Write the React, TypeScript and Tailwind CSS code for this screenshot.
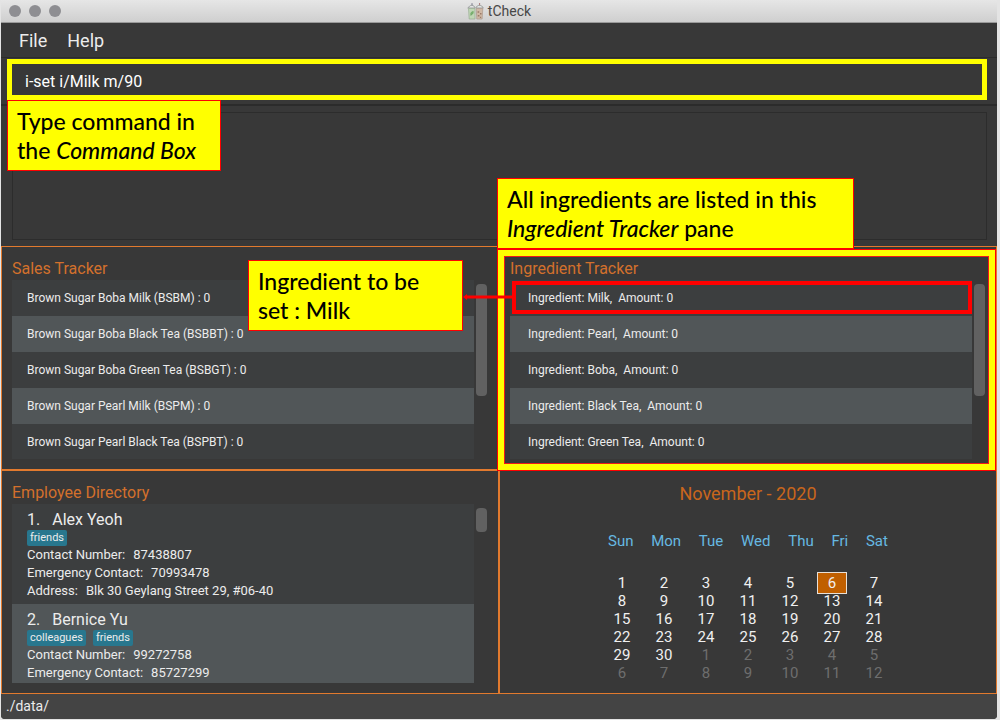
import type { ReactNode } from "react";

const sales = [
  "Brown Sugar Boba Milk (BSBM) : 0",
  "Brown Sugar Boba Black Tea (BSBBT) : 0",
  "Brown Sugar Boba Green Tea (BSBGT) : 0",
  "Brown Sugar Pearl Milk (BSPM) : 0",
  "Brown Sugar Pearl Black Tea (BSPBT) : 0",
];

const ingredients = ["Milk", "Pearl", "Boba", "Black Tea", "Green Tea"];

type Employee = {
  name: string;
  tags: string[];
  fields: [string, string][];
};

const employees: Employee[] = [
  {
    name: "Alex Yeoh",
    tags: ["friends"],
    fields: [
      ["Contact Number:", "87438807"],
      ["Emergency Contact:", "70993478"],
      ["Address:", "Blk 30 Geylang Street 29, #06-40"],
    ],
  },
  {
    name: "Bernice Yu",
    tags: ["colleagues", "friends"],
    fields: [
      ["Contact Number:", "99272758"],
      ["Emergency Contact:", "85727299"],
    ],
  },
];

const weekdays = ["Sun", "Mon", "Tue", "Wed", "Thu", "Fri", "Sat"];
const DAYS_IN_MONTH = 30;
const TODAY = 6;

function Callout({ className, children }: { className: string; children: ReactNode }) {
  return (
    <div
      className={`absolute z-20 border border-[#ff0000] bg-[#ffff00] px-[9px] pt-[6px] pb-[5px] font-['Lato','Liberation_Sans',sans-serif] text-[23px] leading-[29px] font-medium whitespace-nowrap text-black ${className}`}
    >
      {children}
    </div>
  );
}

function CupsIcon() {
  return (
    <svg viewBox="0 0 17 18" className="h-[18px] w-[17px]" aria-hidden="true">
      <g stroke="#9a9f9e" strokeWidth="1" fill="none">
        <path d="M5 6V1.2" stroke="#778" />
        <path d="M12.6 6V1" stroke="#a77" />
        <path d="M1.500 6C2 2.500 7.500 2.500 8 6" fill="#e4e6e4" />
        <path d="M9 6c.6-3.500 6.400-3.500 7 0" fill="#e4e6e4" />
        <path d="M.5 6h7.800M8.800 6h7.700" stroke="#a2a2a2" />
      </g>
      <path d="M1.500 6.500h6.500v10.500H2.200z" fill="#c0d6b5" stroke="#98ae92" strokeWidth=".7" />
      <path d="M9.200 6.500h6.600l-.7 10.500H9.800z" fill="#cfb8a5" stroke="#ab9a8d" strokeWidth=".7" />
      <path d="M3.600 12.500c0-2 1-3 2.700-3 0 2.400-.8 3.300-2.700 3zm0 1.500 1.500-2.500" fill="#7db571" stroke="#6aa263" strokeWidth=".6" />
      <path d="M10.600 9.200h1.600v1.500h-1.600zM13 11h1.500v1.500H13zM10.800 13h1.600v1.600h-1.600zM12.900 14.800h1.200v1.200h-1.200z" fill="#9c7b67" />
    </svg>
  );
}

function Panel({
  title,
  thumb,
  children,
  overlay,
}: {
  title: string;
  thumb: string;
  children: ReactNode;
  overlay?: ReactNode;
}) {
  return (
    <section className="relative min-w-0 border border-[#e27a2e] pt-[11px] pr-[11px] pb-[10px] pl-[10px]">
      <h2 className="text-[16px] leading-[22px] text-[#d3702c]">{title}</h2>
      <div className="flex gap-[2px]">
        <ul className="h-[179px] min-w-0 flex-1 overflow-hidden">{children}</ul>
        <div className={`mt-1 w-[11px] rounded-[4px] bg-[#616161] ${thumb}`} />
      </div>
      {overlay}
    </section>
  );
}

const rowClass = "odd:bg-[#3c3e3f] even:bg-[#515658]";

function Calendar() {
  return (
    <section className="flex min-w-0 flex-col items-center border border-[#e27a2e] pt-[11px]">
      <h2 className="text-[18px] leading-[24px] text-[#c9661c]">November - 2020</h2>
      <table className="mt-[25px] block text-[15px]">
        <thead className="block">
          <tr className="flex justify-between px-[7px] leading-[20px] text-[#66b8e2]">
            {weekdays.map((day) => (
              <th key={day} className="p-0 font-normal">
                {day}
              </th>
            ))}
          </tr>
        </thead>
        <tbody className="mt-[23px] block">
          {[0, 1, 2, 3, 4, 5].map((week) => (
            <tr key={week} className="flex leading-[18px]">
              {weekdays.map((day, i) => {
                const n = week * 7 + i + 1;
                const inMonth = n <= DAYS_IN_MONTH;
                return (
                  <td
                    key={day}
                    className={`flex w-[42px] items-center justify-center p-0 ${inMonth ? "text-[#f0f0f0]" : "text-[#6e6e6e]"}`}
                  >
                    {n === TODAY ? (
                      <span className="-my-[2px] flex h-[22px] w-[30px] items-center justify-center border border-[#e8e0d8] bg-[#c05f00]">
                        {n}
                      </span>
                    ) : (
                      <span>{inMonth ? n : n - DAYS_IN_MONTH}</span>
                    )}
                  </td>
                );
              })}
            </tr>
          ))}
        </tbody>
      </table>
    </section>
  );
}

export default function App() {
  return (
    <div className="min-h-screen bg-[#e4e4e4] pr-[3px] pl-px font-['Roboto','Liberation_Sans',sans-serif] text-[#ececec]">
      <div className="flex flex-col overflow-hidden rounded-b-[4px] bg-[#383838]">
        <header className="relative flex h-[23px] items-center justify-center border-b border-[#9a9a9a] bg-linear-to-b from-[#e6e6e6] to-[#cfcfcf]">
          <div className="absolute left-2 flex gap-2">
            <button aria-label="Close" className="size-3 rounded-full bg-[#8e8e92]" />
            <button aria-label="Minimise" className="size-3 rounded-full bg-[#8e8e92]" />
            <button aria-label="Zoom" className="size-3 rounded-full bg-[#8e8e92]" />
          </div>
          <h1 className="flex items-center gap-1 text-[14px] text-[#484848]">
            <CupsIcon />
            tCheck
          </h1>
        </header>

        <nav className="flex h-[35px] items-center gap-5 border-b border-[#2c2c2c] px-[18px] text-[18px]">
          <button>File</button>
          <button>Help</button>
        </nav>

        <div className="relative border-b-2 border-[#2b2b2b] pt-px pr-[10px] pb-[4px] pl-[6px]">
          <input
            aria-label="Command"
            defaultValue="i-set i/Milk m/90"
            className="block h-[41px] w-full border-[5px] border-[#ffff00] bg-[#383838] pt-[3px] pl-[13px] text-[16px] text-white outline-none"
          />
          <Callout className="top-[42px] left-[6px] w-[214px]">
            Type command in
            <br />
            the <em>Command Box</em>
          </Callout>
        </div>

        <div className="pt-[6px] pr-[10px] pb-[6px] pl-[11px]">
          <output className="block h-32 border border-[#2c2c2c]" />
        </div>

        <main className="grid grid-cols-2">
          <Panel
            title="Sales Tracker"
            thumb="h-[112px]"
            overlay={
              <Callout className="top-[13px] right-[35px] w-[215px]">
                Ingredient to be
                <br />
                set : Milk
              </Callout>
            }
          >
            {sales.map((item) => (
              <li key={item} className={`px-[15px] text-[12px] leading-[36px] ${rowClass}`}>
                {item}
              </li>
            ))}
          </Panel>
          <Panel
            title="Ingredient Tracker"
            thumb="h-[112px]"
            overlay={
              <>
                <div className="absolute top-[2px] right-0 -bottom-[2px] -left-[3px] z-10 border border-[#ff0000]">
                  <div className="size-full border-[6px] border-[#ffff00]">
                    <div className="size-full border border-[#f01818]" />
                  </div>
                </div>
                <div className="absolute top-[34px] right-[24px] left-[12px] z-20 h-[33px] border-4 border-[#ff0000]" />
                <svg
                  viewBox="0 0 50 8"
                  className="absolute top-[46px] -left-[37px] z-30 h-[8px] w-[50px]"
                  aria-hidden="true"
                >
                  <path d="M0 4 4 1v1.500h46v3H4V7z" fill="#ff0000" />
                </svg>
                <Callout className="-top-[69px] -left-[3px] w-[357px]">
                  All ingredients are listed in this
                  <br />
                  <em>Ingredient Tracker</em> pane
                </Callout>
              </>
            }
          >
            {ingredients.map((item) => (
              <li
                key={item}
                className={`px-[18px] text-[12px] leading-[36px] whitespace-pre ${rowClass}`}
              >
                {`Ingredient: ${item},  Amount: 0`}
              </li>
            ))}
          </Panel>

          <Panel title="Employee Directory" thumb="h-[24px]">
            {employees.map((person, i) => (
              <li key={person.name} className={`px-[15px] pt-[6px] pb-1 ${rowClass}`}>
                <h3 className="flex gap-3 text-[16px] leading-[20px]">
                  <span>{i + 1}.</span>
                  <span>{person.name}</span>
                </h3>
                <div className="flex gap-[7px]">
                  {person.tags.map((tag) => (
                    <span
                      key={tag}
                      className="rounded-[2px] bg-[#28778e] px-[3px] text-[11px] leading-[16px]"
                    >
                      {tag}
                    </span>
                  ))}
                </div>
                <dl className="text-[13px] leading-[18px]">
                  {person.fields.map(([label, value]) => (
                    <div key={label} className="flex gap-2">
                      <dt>{label}</dt>
                      <dd>{value}</dd>
                    </div>
                  ))}
                </dl>
              </li>
            ))}
          </Panel>
          <Calendar />
        </main>

        <footer className="bg-[#444444] px-[5px] text-[14px] leading-[25px]">./data/</footer>
      </div>
    </div>
  );
}
